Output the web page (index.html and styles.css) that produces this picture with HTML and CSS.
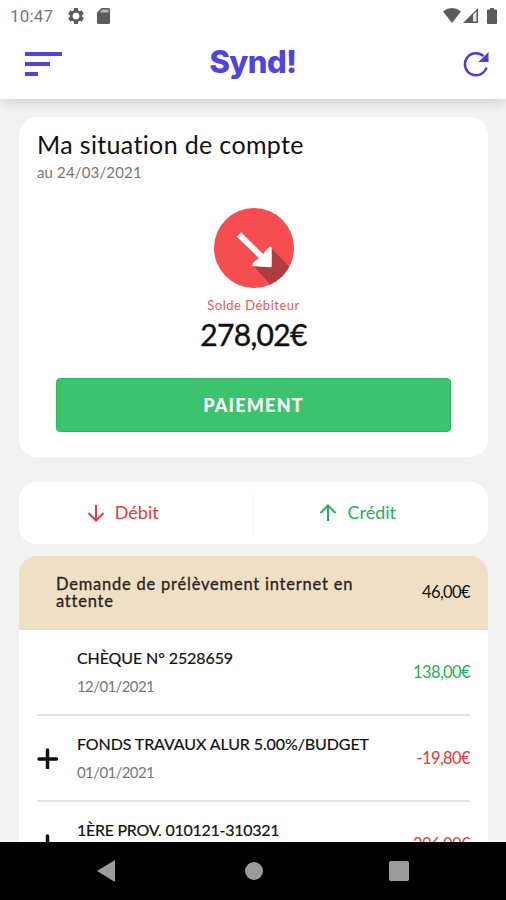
FILE: index.html
```html
<!DOCTYPE html>
<html lang="fr">
<head>
    <meta charset="utf-8">
    <title>Synd!</title>
    <link rel="stylesheet" href="styles.css">
</head>

<body>
    <div class="phone">
        <div class="top">
            <div class="status-bar">
                <span class="time">10:47</span>
                <svg class="gear" width="16" height="16" viewBox="2 2 20 20" fill="#5c5c5c"><path fill-rule="evenodd" d="M19.4 13c0-.3.1-.6.1-1s0-.7-.1-1l2.1-1.6c.2-.2.2-.4.1-.6l-2-3.5c-.1-.2-.4-.3-.6-.2l-2.5 1c-.5-.4-1.1-.7-1.7-1l-.4-2.6c0-.3-.2-.5-.4-.5h-4c-.3 0-.5.2-.5.4l-.4 2.7c-.6.2-1.1.6-1.7 1l-2.5-1c-.2-.1-.5 0-.6.2l-2 3.5c-.1.2-.1.5.1.6L4.6 11c0 .3-.1.7-.1 1s0 .7.1 1l-2.1 1.6c-.2.2-.2.4-.1.6l2 3.5c.1.2.4.3.6.2l2.5-1c.5.4 1.1.7 1.7 1l.4 2.6c0 .3.2.5.5.5h4c.2 0 .4-.2.4-.5l.4-2.6c.6-.3 1.2-.6 1.7-1l2.5 1c.2.1.5 0 .6-.2l2-3.5c.1-.2.1-.4-.1-.6zM12 16.2a4.2 4.2 0 1 1 0-8.4 4.2 4.2 0 0 1 0 8.4z"/></svg>
                <svg class="sd" width="13" height="16" viewBox="0 0 13 16"><path d="M4.5 0H11.5Q13 0 13 1.5V14.5Q13 16 11.5 16H1.5Q0 16 0 14.5V4.5z" fill="#5c5c5c"/><path d="M5 1.5h6.5v3H3z" fill="#b5b5b5"/></svg>
                <svg class="wifi" width="18" height="15" viewBox="0 0 18 15"><path d="M9 15L0 3.4Q9-3.2 18 3.4z" fill="#5c5c5c"/></svg>
                <svg class="signal" width="15" height="15" viewBox="0 0 15 15"><path d="M0 15L15 0V15z" fill="#5c5c5c"/><path d="M10 6.5l3.5-3.5v10.5H10z" fill="#e4e4e4"/></svg>
                <svg class="battery" width="10" height="16" viewBox="0 0 10 16"><path d="M3 0h4v1.5h2q1 0 1 1V15q0 1-1 1H1q-1 0-1-1V2.5q0-1 1-1h2z" fill="#5c5c5c"/></svg>
            </div>
            <div class="header">
                <div class="menu">
                    <span></span>
                    <span></span>
                    <span></span>
                </div>
                <h1 class="logo">Synd!</h1>
                <svg class="refresh" width="26" height="26" viewBox="0 0 26 26"><path d="M23.5 16.5A11 11 0 1 1 20.5 5.2" fill="none" stroke="#4b3dd8" stroke-width="2.5"/><path d="M25.5 1V11H15.5z" fill="#4b3dd8"/></svg>
            </div>
        </div>

        <div class="content">
            <div class="card account">
                <h2>Ma situation de compte</h2>
                <div class="date">au 24/03/2021</div>
                <div class="balance">
                    <svg width="80" height="80" viewBox="0 0 80 80">
                        <clipPath id="disc"><circle cx="40" cy="40" r="40"/></clipPath>
                        <circle cx="40" cy="40" r="40" fill="#f64e50"/>
                        <path d="M57 40L80 63V80H59L39 57z" fill="#b13c40" clip-path="url(#disc)"/>
                        <path d="M25 26.5L50 51" stroke="#fff" stroke-width="6"/>
                        <path d="M56.500 40V58L39.500 57Q40 54 47.500 50.500 54 41 56.500 40z" fill="#fff" stroke="#fff" stroke-width="2.500" stroke-linejoin="round"/>
                    </svg>
                    <div class="balance-label">Solde Débiteur</div>
                    <div class="balance-amount">278,02€</div>
                </div>
                <button class="pay">PAIEMENT</button>
            </div>

            <div class="card tabs">
                <div class="tab debit">
                    <svg width="18" height="18" viewBox="0 0 18 18"><path d="M9 1v15.5M1.5 9L9 16.5 16.5 9"/></svg>
                    <span>Débit</span>
                </div>
                <div class="tab credit">
                    <svg width="18" height="18" viewBox="0 0 18 18"><path d="M9 17V1.5M1.5 9L9 1.5 16.5 9"/></svg>
                    <span>Crédit</span>
                </div>
            </div>

            <div class="card list">
                <div class="pending">
                    <div class="pending-label">Demande de prélèvement internet en attente</div>
                    <div class="amount">46,00€</div>
                </div>
                <div class="row">
                    <div class="plus"></div>
                    <div class="row-text">
                        <div class="row-title">CHÈQUE N° 2528659</div>
                        <div class="row-date">12/01/2021</div>
                    </div>
                    <div class="amount green">138,00€</div>
                </div>
                <div class="row">
                    <div class="plus"><svg width="21" height="21" viewBox="0 0 21 21"><path d="M10.5 2v18M2 11h17.5"/></svg></div>
                    <div class="row-text">
                        <div class="row-title">FONDS TRAVAUX ALUR 5.00%/BUDGET</div>
                        <div class="row-date">01/01/2021</div>
                    </div>
                    <div class="amount red">-19,80€</div>
                </div>
                <div class="row">
                    <div class="plus"><svg width="21" height="21" viewBox="0 0 21 21"><path d="M10.5 2v18M2 11h17.5"/></svg></div>
                    <div class="row-text">
                        <div class="row-title tight">1ÈRE PROV. 010121-310321</div>
                        <div class="row-date"></div>
                    </div>
                    <div class="amount red">-296,00€</div>
                </div>
            </div>
        </div>

        <div class="nav-bar">
            <svg width="18" height="22" viewBox="0 0 18 22"><path d="M18 0v22L0 11z"/></svg>
            <svg class="home" width="18" height="18" viewBox="0 0 18 18"><circle cx="9" cy="9" r="9"/></svg>
            <svg width="20" height="20" viewBox="0 0 20 20"><rect width="20" height="20" rx="2"/></svg>
        </div>
    </div>
</body>
</html>
```
FILE: styles.css
```css
* {
    box-sizing: border-box;
}

body {
    margin: 0;
    background: #f2f2f2;
    color: #111;
    font-family: Lato, "Liberation Sans", sans-serif;
}

.phone {
    display: flex;
    flex-direction: column;
    height: 900px;
    overflow: hidden;
}

.top {
    height: 99px;
    flex-shrink: 0;
    background: #fff;
    box-shadow: 0 1px 12px rgba(0, 0, 0, 0.2);
    z-index: 1;
}

/* android status bar */
.status-bar {
    display: flex;
    align-items: center;
    height: 31px;
    padding: 0 9px 0 10px;
}

.time {
    width: 58px;
    font-family: Roboto, sans-serif;
    font-size: 17px;
    letter-spacing: 0.2px;
    color: #777;
}

.sd {
    margin-left: 13px;
}

.wifi {
    margin-left: auto;
}

.signal {
    margin-left: 2px;
}

.battery {
    margin-left: 9px;
}

.header {
    display: grid;
    grid-template-columns: 1fr auto 1fr;
    align-items: center;
    height: 68px;
    padding: 0 17px;
}

.menu {
    display: flex;
    flex-direction: column;
    gap: 6px;
    margin: -2px 0 0 8px;
}

.menu span {
    height: 4px;
    width: 37px;
    background: #5144dc;
}

.menu span:nth-child(2) {
    width: 25px;
}

.menu span:nth-child(3) {
    width: 13px;
}

.logo {
    margin: -6px 0 0;
    font-family: Inter, sans-serif;
    font-size: 31px;
    font-weight: 800;
    line-height: 40px;
    letter-spacing: -0.6px;
    color: #5144dc;
}

.refresh {
    justify-self: end;
    margin-top: -2px;
}

.content {
    flex: 1;
    min-height: 0;
    overflow: hidden;
    padding: 18px 18px 0 19px;
}

.card {
    background: #fff;
    border-radius: 18px;
}

.account {
    height: 340px;
    padding: 12px 37px 0;
}

.account h2 {
    margin: 0 0 0 -19px;
    font-size: 25px;
    font-weight: 400;
    line-height: 30px;
    letter-spacing: 0.35px;
}

.date {
    margin: 4px 0 0 -19px;
    font-size: 15px;
    line-height: 18px;
    letter-spacing: 0.15px;
    color: #777;
}

.balance {
    display: flex;
    flex-direction: column;
    align-items: center;
    margin-top: 27px;
}

.balance-label {
    margin-top: 9px;
    font-size: 13px;
    line-height: 16px;
    letter-spacing: 0.5px;
    color: #f0595b;
}

.balance-amount {
    margin-top: 2px;
    font-size: 30px;
    line-height: 38px;
    letter-spacing: -0.7px;
    -webkit-text-stroke: 0.4px #111;
}

.pay {
    display: block;
    width: 100%;
    height: 54px;
    margin-top: 25px;
    border: 1px solid #28b862;
    border-radius: 4px;
    background: #3cc36e;
    color: #fff;
    font-family: inherit;
    font-size: 18px;
    font-weight: 900;
    letter-spacing: 1.2px;
}

.tabs {
    display: flex;
    align-items: center;
    height: 62px;
    margin-top: 25px;
}

.tab {
    display: flex;
    align-items: center;
    justify-content: center;
    gap: 10px;
    width: 50%;
    height: 40px;
    padding-right: 26px;
    font-size: 18px;
    line-height: 20px;
}

.tab span {
    margin-top: -2px;
}

.tab svg {
    fill: none;
    stroke: currentColor;
    stroke-width: 2;
}

.debit {
    color: #e8393e;
    border-right: 1px solid #f5f5f5;
}

.credit {
    color: #25b158;
}

.list {
    margin-top: 12px;
    overflow: hidden;
}

.pending {
    display: flex;
    align-items: center;
    justify-content: space-between;
    height: 74px;
    padding: 0 18px 0 37px;
    background: #efdfc5;
}

.pending-label {
    width: 320px;
    font-size: 16.5px;
    line-height: 17.5px;
    letter-spacing: 0.78px;
    color: #2b241b;
    -webkit-text-stroke: 0.3px #2b241b;
}

.row {
    display: flex;
    align-items: center;
    height: 86px;
    margin: 0 18px;
    border-bottom: 2px solid #e2e2e2;
}

.plus {
    width: 40px;
    height: 21px;
}

.plus svg {
    fill: none;
    stroke: #111;
    stroke-width: 3.5;
    stroke-linecap: round;
}

.row-title {
    font-size: 16px;
    line-height: 20px;
    letter-spacing: -0.1px;
    -webkit-text-stroke: 0.2px #111;
}

.tight {
    letter-spacing: -0.27px;
}

.row-date {
    height: 19px;
    margin-top: 9px;
    font-size: 15px;
    line-height: 19px;
    letter-spacing: -0.6px;
    color: #777;
}

.amount {
    margin-left: auto;
    font-size: 16.5px;
    line-height: 20px;
    letter-spacing: -0.6px;
}

.pending .amount {
    margin-top: -2px;
}

.green {
    color: #25b158;
}

.red {
    color: #e8393e;
}

.nav-bar {
    display: flex;
    align-items: center;
    justify-content: space-between;
    height: 58px;
    flex-shrink: 0;
    padding: 0 97px;
    background: #000;
}

.nav-bar svg {
    fill: #9b9b9b;
}

.home {
    margin-left: 3px;
}
```
